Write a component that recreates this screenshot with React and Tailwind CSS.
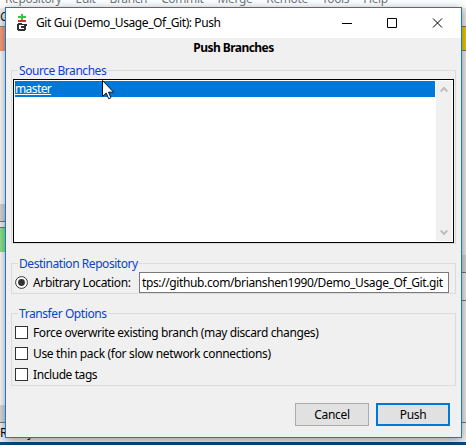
import React from "react";

const fontStack = "font-['Noto_Sans','Open_Sans',sans-serif]";

function Group({ title, tracking, className, children }) {
  return (
    <fieldset className={`mx-[5px] border border-[#dcdcdc] ${className}`}>
      <legend className={`ml-[6px] h-[17px] pl-px text-[12px] leading-[17px] whitespace-nowrap text-[#0b3fd0] ${tracking}`}>{title}</legend>
      {children}
    </fieldset>
  );
}

function Check({ label, tracking }) {
  return (
    <label className="flex h-[21px] items-center gap-[5px] pl-[3px]">
      <span className="h-[13px] w-[13px] border border-[#333] bg-white" />
      <span className={`whitespace-nowrap ${tracking}`}>{label}</span>
    </label>
  );
}

function GitLogo() {
  return (
    <svg width="12" height="18" viewBox="0 0 12 18" shapeRendering="crispEdges">
      <path d="M5 0h2v2h3v2H7v2H5V4H2V2h3z" fill="#2fc93c" />
      <path d="M2 6h8v2H2z" fill="#c83232" />
      <path
        d="M2 9h4v1h5v2h-1v4h-1v1H2v-1H1v-6h1zM3 11v4h5v-1H5v-2h3v-1z"
        fill="#303030"
        fillRule="evenodd"
      />
    </svg>
  );
}

function Backdrop() {
  return (
    <div className="flex h-full flex-col">
      <div className="flex h-[8px] shrink-0 items-end overflow-hidden bg-white pl-[5px] text-[#777]">
        <div className="flex h-[18px] gap-[14px] leading-[18px] tracking-[-0.38px]">
          <span>Repository</span><span>Edit</span><span>Branch</span><span>Commit</span>
          <span>Merge</span><span>Remote</span><span>Tools</span><span>Help</span>
        </div>
      </div>
      <div className="flex flex-1 justify-between">
        <div className="w-[6px] overflow-hidden">
          <div className="h-[18px] leading-[18px] text-[#222]">C</div>
          <div className="h-[25px] border-t border-[#888] bg-[#f59d78]" />
          <div className="h-[153px] bg-[#fafafa]" />
          <div className="h-[17px] bg-[#d5d5d5]" />
          <div className="h-[7px] border-y border-[#777] bg-[#eee]" />
          <div className="h-[24px] bg-[#8be28b]" />
          <div className="h-[153px] bg-[#fafafa]" />
          <div className="h-[17px] bg-[#d9d9d9]" />
        </div>
        <div className="w-[5px] bg-[#e8e8e8]">
          <div className="h-[18px]" />
          <div className="h-[25px] border-y border-[#777] bg-[#ecc700]" />
          <div className="h-[204px]" />
          <div className="h-[17px] bg-[#d2d2d2]" />
          <div className="h-[29px] border-y border-[#777]" />
        </div>
      </div>
      <div className="h-[20px] border-t border-[#777] bg-[#f0f0f0] leading-[20px] tracking-[-0.3px]">Ready.</div>
      <div className="h-[3px] bg-[#004b86]" />
    </div>
  );
}

export default function App() {
  return (
    <div className={`relative h-[445px] w-[466px] overflow-hidden bg-[#f0f0f0] text-[12px] text-black ${fontStack}`}>
      <Backdrop />
      <main className="absolute top-[7px] left-[5px] flex h-[431px] w-[457px] flex-col border border-[#1979ca] bg-[#f0f0f0] shadow-[0_2px_9px_rgba(0,0,0,0.4)]">
        <header className="flex h-[30px] shrink-0 items-center bg-white pl-[10px]">
          <GitLogo />
          <h1 className="ml-[8px] flex-1 whitespace-nowrap tracking-[-0.41px]">Git Gui (Demo_Usage_Of_Git): Push</h1>
          <svg width="102" height="11" viewBox="0 0 102 11" className="mr-[17px]" fill="none" stroke="#000">
            <path d="M0 5.5h10M45.5 .5h9v9h-9z" />
            <path d="M91 .5l9 9M100 .5l-9 9" />
          </svg>
        </header>
        <h2 className="h-[24px] shrink-0 text-center leading-[20px] font-bold tracking-[-0.55px]">Push Branches</h2>
        <Group title="Source Branches" tracking="tracking-[-0.45px]" className="h-[182px]">
          <div className="ml-px flex h-[164px] w-[441px] border border-black bg-white p-px">
            <div className="h-[16px] w-[420px] bg-[#0078d7] leading-[16px] tracking-[-0.6px] text-white underline">master</div>
            <div className="ml-px flex w-[16px] flex-col items-center justify-between bg-[#f0f0f0] py-[5px]">
              <svg width="8" height="7" viewBox="0 0 8 7" fill="none" stroke="#bfbfbf" strokeWidth="2"><path d="M.7 5.5L4 2l3.300 3.500" /></svg>
              <svg width="8" height="7" viewBox="0 0 8 7" fill="none" stroke="#bfbfbf" strokeWidth="2"><path d="M.7 1.500L4 5l3.300-3.500" /></svg>
            </div>
          </div>
        </Group>
        <Group title="Destination Repository" tracking="tracking-[-0.44px]" className="mt-[11px] h-[39px]">
          <div className="flex h-[21px] items-center pl-[3px]">
            <svg width="13" height="13" viewBox="0 0 13 13"><circle cx="6.500" cy="6.500" r="5.900" fill="white" stroke="#333" /><circle cx="6.500" cy="6.500" r="3.400" fill="#333" /></svg>
            <span className="ml-[5px] w-[106px] whitespace-nowrap tracking-[-0.36px]">Arbitrary Location:</span>
            <div className="h-[21px] w-[310px] border border-[#7a7a7a] bg-white pl-[2px] leading-[19px] whitespace-nowrap tracking-[-0.38px]">tps://github.com/brianshen1990/Demo_Usage_Of_Git.git</div>
          </div>
        </Group>
        <Group title="Transfer Options" tracking="tracking-[-0.42px]" className="mt-[11px] h-[81px]">
          <Check label="Force overwrite existing branch (may discard changes)" tracking="tracking-[-0.38px]" />
          <Check label="Use thin pack (for slow network connections)" tracking="tracking-[-0.33px]" />
          <Check label="Include tags" tracking="tracking-[-0.42px]" />
        </Group>
        <footer className="mt-[17px] flex justify-end gap-[7px] pr-[11px]">
          <button className="h-[23px] w-[74px] border border-[#adadad] bg-[#e1e1e1] leading-[20px] tracking-[-0.3px]">Cancel</button>
          <button className="h-[23px] w-[74px] border-2 border-[#0078d7] bg-[#e1e1e1] leading-[18px] tracking-[-0.3px]">Push</button>
        </footer>
      </main>
      <svg className="absolute top-[80px] left-[102px]" width="13" height="20" viewBox="0 0 13 20">
        <path d="M.5.5v16l3.700-3.500 2.500 5.700 2.300-1-2.500-5.500h5.200z" fill="white" stroke="#111" />
      </svg>
    </div>
  );
}
